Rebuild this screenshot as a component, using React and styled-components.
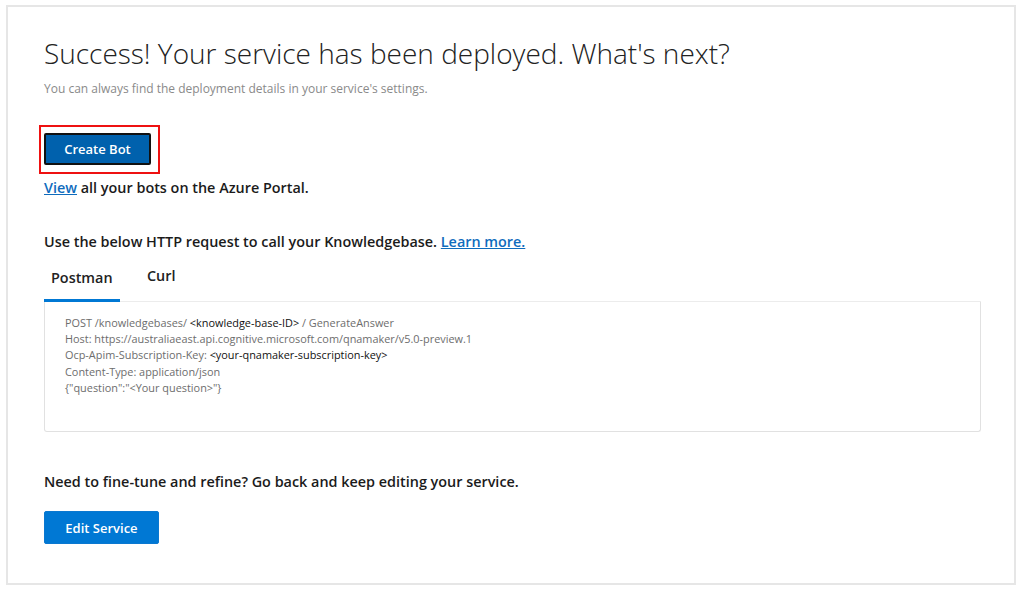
import React, { useState } from "react";
import styled, { createGlobalStyle } from "styled-components";

const Global = createGlobalStyle`
  html, body { margin: 0; padding: 0; background: #fff; }
  body { font-family: "Open Sans", "Noto Sans", sans-serif; color: #1b1b1b; }
`;

const Frame = styled.div`
  box-sizing: border-box;
  margin: 5px 7px 0 6px;
  height: 580px;
  border: 2px solid #e6e6e6;
  padding: 28px 34px 0 36px;
  display: flex;
  flex-direction: column;
`;

const Title = styled.h1`
  margin: 0;
  font-size: 28px;
  font-weight: 300;
  line-height: 36px;
  color: #222;
`;

const Subtitle = styled.p`
  margin: 10px 0 0;
  font-size: 12px;
  line-height: 16px;
  color: #8a8a8a;
`;

const Highlight = styled.div`
  align-self: flex-start;
  margin: 28px 0 0 -5px;
  padding: 6px 7px 7px 3px;
  border: 2px solid #ee1111;
  display: flex;
`;

const Button = styled.button`
  box-sizing: border-box;
  font-family: inherit;
  font-size: 13px;
  font-weight: 600;
  color: #fff;
  height: ${(p) => p.$h}px;
  width: ${(p) => p.$w}px;
  margin-top: ${(p) => p.$mt || 0}px;
  background: ${(p) => (p.$dark ? "#0061ad" : "#0078d4")};
  border: ${(p) => (p.$dark ? "2px solid #111" : "1px solid #0b78d0")};
  border-radius: 2px;
  padding: 0;
  cursor: pointer;
`;

const Line = styled.p`
  margin: ${(p) => p.$m || "0"};
  font-size: 14.4px;
  font-weight: 600;
  line-height: 20px;
  color: #1b1b1b;
`;

const Link = styled.a`
  color: #0f6cbd;
  text-decoration: underline;
  font-weight: 600;
  cursor: pointer;
`;

const Tabs = styled.div`
  display: flex;
  align-items: flex-start;
  margin-top: 14px;
  border-bottom: 1px solid #ececec;
  width: 937px;
`;

const Tab = styled.button`
  font-family: inherit;
  font-size: 14.4px;
  font-weight: 600;
  color: #222;
  background: none;
  border: none;
  padding: ${(p) => (p.$active ? "2px 7px 12px" : "0 7px 14px")};
  margin-right: 20px;
  border-bottom: 3px solid ${(p) => (p.$active ? "#0078d4" : "transparent")};
  margin-bottom: -1px;
  cursor: pointer;
  line-height: 19px;
  width: ${(p) => p.$w}px;
  text-align: left;
`;

const CodeBox = styled.div`
  box-sizing: border-box;
  width: 937px;
  height: 130px;
  border: 1px solid #e1e1e1;
  border-top: none;
  border-radius: 0 0 3px 3px;
  padding: 13px 20px;
  font-size: 10.9px;
  line-height: 16.2px;
  color: #6d6d6d;
`;

const Dark = styled.span`
  color: #111;
`;

export default function App() {
  const [tab, setTab] = useState("postman");
  return (
    <>
      <Global />
      <Frame>
        <Title>Success! Your service has been deployed. What's next?</Title>
        <Subtitle>You can always find the deployment details in your service's settings.</Subtitle>
        <Highlight>
          <Button $dark $w={107} $h={32}>Create Bot</Button>
        </Highlight>
        <Line $m="4px 0 0">
          <Link>View</Link> all your bots on the Azure Portal.
        </Line>
        <Line $m="34px 0 0">
          Use the below HTTP request to call your Knowledgebase. <Link>Learn more.</Link>
        </Line>
        <Tabs>
          <Tab $active={tab === "postman"} $w={76} onClick={() => setTab("postman")}>Postman</Tab>
          <Tab $active={tab === "curl"} $w={50} onClick={() => setTab("curl")}>Curl</Tab>
        </Tabs>
        <CodeBox>
          <div>POST /knowledgebases/ <Dark>&lt;knowledge-base-ID&gt;</Dark> / GenerateAnswer</div>
          <div>Host: https://australiaeast.api.cognitive.microsoft.com/qnamaker/v5.0-preview.1</div>
          <div>Ocp-Apim-Subscription-Key: <Dark>&lt;your-qnamaker-subscription-key&gt;</Dark></div>
          <div>Content-Type: application/json</div>
          <div>{'{"question":"<Your question>"}'}</div>
        </CodeBox>
        <Line $m="40px 0 0">Need to fine-tune and refine? Go back and keep editing your service.</Line>
        <div>
          <Button $w={115} $h={33} $mt={19}>Edit Service</Button>
        </div>
      </Frame>
    </>
  );
}
